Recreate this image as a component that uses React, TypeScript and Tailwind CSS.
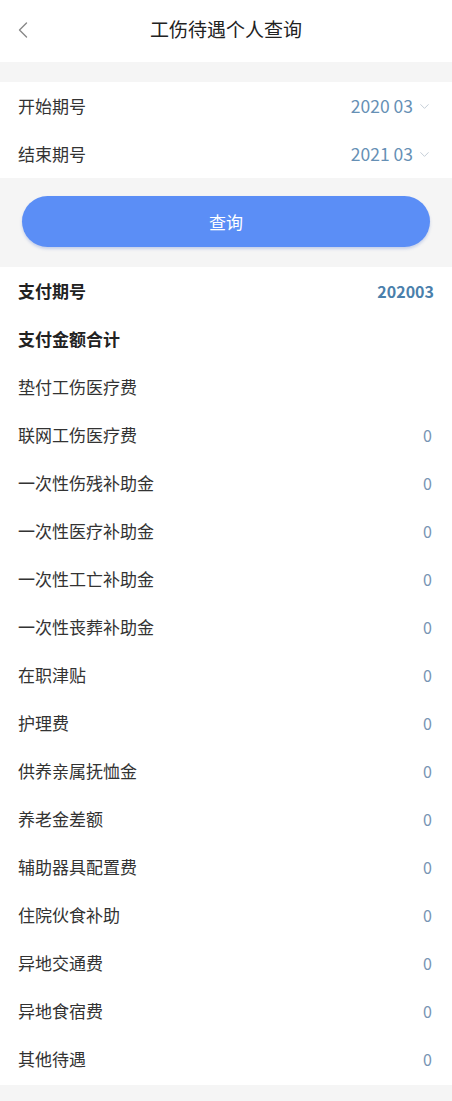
import { ChevronLeft, ChevronDown } from 'lucide-react';

const items: { label: string; value?: string }[] = [
  { label: '垫付工伤医疗费' },
  { label: '联网工伤医疗费', value: '0' },
  { label: '一次性伤残补助金', value: '0' },
  { label: '一次性医疗补助金', value: '0' },
  { label: '一次性工亡补助金', value: '0' },
  { label: '一次性丧葬补助金', value: '0' },
  { label: '在职津贴', value: '0' },
  { label: '护理费', value: '0' },
  { label: '供养亲属抚恤金', value: '0' },
  { label: '养老金差额', value: '0' },
  { label: '辅助器具配置费', value: '0' },
  { label: '住院伙食补助', value: '0' },
  { label: '异地交通费', value: '0' },
  { label: '异地食宿费', value: '0' },
  { label: '其他待遇', value: '0' },
];

const font = { fontFamily: '"Noto Sans CJK SC", "Noto Sans", sans-serif' };

export default function App() {
  return (
    <div className="w-[452px] min-h-[1101px] bg-[#f5f5f5] text-[#333]" style={font}>
      {/* 顶部导航 */}
      <div className="relative h-[62px] bg-white flex items-center justify-center">
        <ChevronLeft className="absolute left-[9px] top-[16px] w-[28px] h-[28px] text-[#888]" strokeWidth={1.2} />
        <span className="text-[19px] text-[#222] -mt-[4px]">工伤待遇个人查询</span>
      </div>

      <div className="h-[20px]" />

      {/* 期号选择 */}
      <div className="bg-white">
        <div className="h-[48px] flex items-center justify-between pl-[18px] pr-[20px]">
          <span className="text-[17px]">开始期号</span>
          <span className="flex items-center gap-[4px] text-[17.5px] text-[#6690b5]">
            2020 03
            <ChevronDown className="w-[15px] h-[15px] text-[#bcc6d0]" strokeWidth={1.4} />
          </span>
        </div>
        <div className="h-[48px] flex items-center justify-between pl-[18px] pr-[20px]">
          <span className="text-[17px]">结束期号</span>
          <span className="flex items-center gap-[4px] text-[17.5px] text-[#6690b5]">
            2021 03
            <ChevronDown className="w-[15px] h-[15px] text-[#bcc6d0]" strokeWidth={1.4} />
          </span>
        </div>
      </div>

      {/* 查询按钮 */}
      <div className="px-[22px] pt-[18px] pb-[20px]">
        <button className="w-full h-[51px] rounded-full bg-[#5b8ef6] text-white text-[17px] shadow-[0_2px_3px_rgba(60,100,200,0.25)]">
          查询
        </button>
      </div>

      {/* 结果列表 */}
      <div className="bg-white pb-[2px]">
        <div className="h-[48px] flex items-center justify-between px-[18px]">
          <span className="text-[17px] font-bold text-[#222]">支付期号</span>
          <span className="text-[16px] font-bold text-[#4a7fab]">202003</span>
        </div>
        <div className="h-[48px] flex items-center px-[18px]">
          <span className="text-[17px] font-bold text-[#222]">支付金额合计</span>
        </div>
        {items.map((it) => (
          <div key={it.label} className="h-[48px] flex items-center justify-between px-[18px]">
            <span className="text-[17px] text-[#333]">{it.label}</span>
            {it.value && <span className="text-[16px] text-[#7794b3] pr-[2px]">{it.value}</span>}
          </div>
        ))}
      </div>
    </div>
  );
}
